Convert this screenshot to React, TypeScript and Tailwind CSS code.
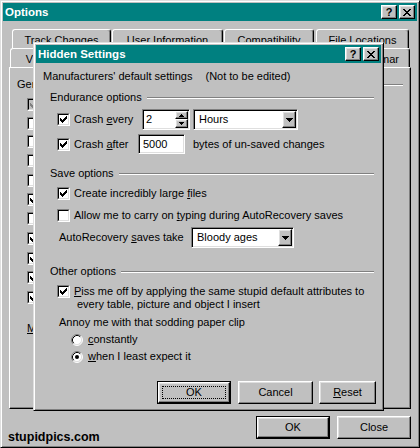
import React from "react";

const frame =
  "border border-t-[#dfdfdf] border-l-[#dfdfdf] border-r-black border-b-black shadow-[inset_1px_1px_0_#fff,inset_-1px_-1px_0_#808080]";
const raised =
  "border border-t-white border-l-white border-r-black border-b-black shadow-[inset_-1px_-1px_0_#808080,inset_1px_1px_0_#dfdfdf]";
const sunken =
  "border border-t-[#808080] border-l-[#808080] border-r-white border-b-white shadow-[inset_1px_1px_0_#000,inset_-1px_-1px_0_#dfdfdf]";

function XGlyph() {
  return (
    <svg width="8" height="7" viewBox="0 0 8 7" shapeRendering="crispEdges" fill="#000">
      <rect x="0" y="0" width="2" height="1" />
      <rect x="6" y="0" width="2" height="1" />
      <rect x="1" y="1" width="2" height="1" />
      <rect x="5" y="1" width="2" height="1" />
      <rect x="2" y="2" width="4" height="1" />
      <rect x="3" y="3" width="2" height="1" />
      <rect x="2" y="4" width="4" height="1" />
      <rect x="1" y="5" width="2" height="1" />
      <rect x="5" y="5" width="2" height="1" />
      <rect x="0" y="6" width="2" height="1" />
      <rect x="6" y="6" width="2" height="1" />
    </svg>
  );
}

function TBtn({ children }: { children: React.ReactNode }) {
  return (
    <div className={`w-[16px] h-[14px] bg-[#c0c0c0] ${raised} flex items-center justify-center`}>
      {children}
    </div>
  );
}

function TitleBar({ title }: { title: string }) {
  return (
    <div className="h-[18px] shrink-0 bg-[#008080] flex items-center justify-between pl-[2px] pr-[2px]">
      <span className="text-white font-bold text-[11.5px] leading-[18px] whitespace-nowrap">{title}</span>
      <div className="flex gap-[2px]">
        <TBtn>
          <span className="font-bold text-[11px] leading-[10px] text-black">?</span>
        </TBtn>
        <TBtn>
          <XGlyph />
        </TBtn>
      </div>
    </div>
  );
}

function CheckMark({ c }: { c: string }) {
  return (
    <svg width="7" height="7" viewBox="0 0 7 7" shapeRendering="crispEdges" fill={c}>
      <rect x="6" y="0" width="1" height="1" />
      <rect x="5" y="1" width="2" height="1" />
      <rect x="0" y="2" width="1" height="1" />
      <rect x="4" y="2" width="3" height="1" />
      <rect x="0" y="3" width="2" height="1" />
      <rect x="3" y="3" width="3" height="1" />
      <rect x="0" y="4" width="5" height="1" />
      <rect x="1" y="5" width="3" height="1" />
      <rect x="2" y="6" width="1" height="1" />
    </svg>
  );
}

function Check({ checked = false, disabled = false }: { checked?: boolean; disabled?: boolean }) {
  return (
    <div className="w-[13px] h-[13px] shrink-0 border border-t-[#808080] border-l-[#808080] border-r-white border-b-white">
      <div
        className={`w-full h-full border border-t-black border-l-black border-r-[#dfdfdf] border-b-[#dfdfdf] flex items-center justify-center ${
          disabled ? "bg-[#c0c0c0]" : "bg-white"
        }`}
      >
        {checked && <CheckMark c={disabled ? "#808080" : "#000"} />}
      </div>
    </div>
  );
}

function Radio({ on = false }: { on?: boolean }) {
  return (
    <svg width="12" height="12" viewBox="0 0 12 12" className="shrink-0">
      <circle cx="6" cy="6" r="5" fill="#fff" />
      <path d="M2.11 9.89A5.5 5.5 0 0 1 9.89 2.11" stroke="#808080" fill="none" />
      <path d="M9.89 2.11A5.5 5.5 0 0 1 2.11 9.89" stroke="#fff" fill="none" />
      <path d="M2.82 9.18A4.5 4.5 0 0 1 9.18 2.82" stroke="#000" fill="none" />
      <path d="M9.18 2.82A4.5 4.5 0 0 1 2.82 9.18" stroke="#dfdfdf" fill="none" />
      {on && <circle cx="6" cy="6" r="2" fill="#000" />}
    </svg>
  );
}

function DownArrow() {
  return (
    <svg width="7" height="4" viewBox="0 0 7 4" shapeRendering="crispEdges" fill="#000">
      <rect x="0" y="0" width="7" height="1" />
      <rect x="1" y="1" width="5" height="1" />
      <rect x="2" y="2" width="3" height="1" />
      <rect x="3" y="3" width="1" height="1" />
    </svg>
  );
}

function SmallArrow({ up }: { up?: boolean }) {
  return (
    <svg width="5" height="3" viewBox="0 0 5 3" shapeRendering="crispEdges" fill="#000">
      {up ? (
        <>
          <rect x="2" y="0" width="1" height="1" />
          <rect x="1" y="1" width="3" height="1" />
          <rect x="0" y="2" width="5" height="1" />
        </>
      ) : (
        <>
          <rect x="0" y="0" width="5" height="1" />
          <rect x="1" y="1" width="3" height="1" />
          <rect x="2" y="2" width="1" height="1" />
        </>
      )}
    </svg>
  );
}

function Spin({ value }: { value: string }) {
  return (
    <div className={`${sunken} bg-white w-[48px] h-[21px] p-[1px] flex shrink-0`}>
      <div className="flex-1 flex items-center pl-[2px] leading-[13px]">{value}</div>
      <div className="w-[13px] flex flex-col">
        <div className={`h-[8px] bg-[#c0c0c0] ${raised} flex items-center justify-center`}>
          <SmallArrow up />
        </div>
        <div className={`flex-1 bg-[#c0c0c0] ${raised} flex items-center justify-center`}>
          <SmallArrow />
        </div>
      </div>
    </div>
  );
}

function Combo({ text, className }: { text: string; className: string }) {
  return (
    <div className={`${sunken} bg-white h-[21px] p-[1px] flex shrink-0 ${className}`}>
      <div className="flex-1 flex items-center pl-[4px] leading-[13px] whitespace-nowrap">{text}</div>
      <div className={`w-[14px] bg-[#c0c0c0] ${raised} flex items-center justify-center`}>
        <DownArrow />
      </div>
    </div>
  );
}

function Button({
  children,
  w,
  def = false,
  focus = false,
  className = "",
}: {
  children: React.ReactNode;
  w: string;
  def?: boolean;
  focus?: boolean;
  className?: string;
}) {
  const inner = (
    <div className={`relative w-full h-full bg-[#c0c0c0] ${raised} flex items-center justify-center leading-[13px]`}>
      {focus && <div className="absolute inset-[3px] border border-dotted border-black" />}
      <span>{children}</span>
    </div>
  );
  return (
    <div className={`${w} h-[23px] shrink-0 ${def ? "border border-black" : ""} ${className}`}>{inner}</div>
  );
}

function Tab({ className = "", label, pt }: { className?: string; label?: string; pt: string }) {
  return (
    <div
      className={`h-full shrink-0 border-t border-l border-r border-t-white border-l-white border-r-black rounded-t-[3px] shadow-[inset_-1px_0_0_#808080] flex items-center justify-center whitespace-nowrap leading-[13px] ${pt} ${className}`}
    >
      {label}
    </div>
  );
}

function Group({ label, className }: { label: string; className: string }) {
  return (
    <div className={`h-[13px] flex items-center pl-[7px] ${className}`}>
      <span className="leading-[13px] whitespace-nowrap">{label}</span>
      <div className="flex-1 ml-[5px] h-[2px] border-t border-t-[#808080] border-b border-b-white" />
    </div>
  );
}

const U = ({ children }: { children: React.ReactNode }) => <span className="underline">{children}</span>;

const leftChecks: { mt: string; checked: boolean; disabled?: boolean }[] = [
  { mt: "mt-[7px]", checked: true, disabled: true },
  { mt: "mt-[6px]", checked: false },
  { mt: "mt-[5px]", checked: false },
  { mt: "mt-[6px]", checked: false },
  { mt: "mt-[7px]", checked: false },
  { mt: "mt-[6px]", checked: true },
  { mt: "mt-[6px]", checked: false },
  { mt: "mt-[7px]", checked: true },
  { mt: "mt-[7px]", checked: true },
  { mt: "mt-[6px]", checked: true },
  { mt: "mt-[7px]", checked: true },
];

export default function App() {
  return (
    <div className="relative w-[420px] h-[448px] overflow-hidden bg-[#c0c0c0] text-black text-[11px] font-['Liberation_Sans',Arial,sans-serif]">
      {/* Options window */}
      <div className={`w-full h-full ${frame} p-[2px] flex flex-col`}>
        <TitleBar title="Options" />
        <div className="mt-[8px] h-[19px] flex pl-[9px]">
          <Tab className="w-[99px]" label="Track Changes" pt="pt-[2px]" />
          <Tab className="ml-[1px] w-[111px]" label="User Information" pt="pt-[2px]" />
          <Tab className="ml-[1px] w-[90px]" label="Compatibility" pt="pt-[2px]" />
          <Tab className="ml-[2px] w-[93px]" label="File Locations" pt="pt-[2px]" />
        </div>
        <div className="h-[19px] flex pl-[7px] pr-[7px]">
          <Tab className="w-[55px]" label="View" pt="pt-[3px]" />
          <Tab className="flex-1" pt="pt-[3px]" />
          <Tab className="flex-1" pt="pt-[3px]" />
          <Tab className="flex-1" pt="pt-[3px]" />
          <Tab className="flex-1" pt="pt-[3px]" />
          <Tab className="w-[121px]" label="Spelling & Grammar" pt="pt-[3px]" />
        </div>
        <div className="mx-[6px] h-[342px] shrink-0 border border-t-white border-l-white border-r-black border-b-black shadow-[inset_-1px_-1px_0_#808080] flex flex-col pl-[7px] pr-[7px]">
          <div className="mt-[10px] h-[13px] flex items-center">
            <span className="leading-[13px] whitespace-nowrap">General options</span>
            <div className="flex-1 ml-[5px] h-[2px] border-t border-t-[#808080] border-b border-b-white" />
          </div>
          {leftChecks.map((c, i) => (
            <div key={i} className={`${c.mt} h-[13px] pl-[10px] flex`}>
              <Check checked={c.checked} disabled={c.disabled} />
            </div>
          ))}
          <div className="mt-[18px] h-[13px] pl-[10px] flex items-center leading-[13px] whitespace-nowrap">
            <span>
              <U>M</U>easurement units:
            </span>
          </div>
        </div>
        <div className="mt-[7px] flex justify-end pr-[6px] gap-[7px]">
          <Button w="w-[74px]" def>
            OK
          </Button>
          <Button w="w-[74px]">Close</Button>
        </div>
      </div>

      {/* Hidden Settings dialog */}
      <div
        className={`absolute left-[33px] top-[42px] w-[351px] h-[369px] bg-[#c0c0c0] ${frame} p-[2px] flex flex-col`}
      >
        <TitleBar title="Hidden Settings" />
        <div className="flex flex-col pl-[7px] pr-[7px] leading-[13px] whitespace-nowrap">
          <div className="mt-[6px] h-[14px] flex items-center">
            <span>Manufacturers' default settings</span>
            <span className="ml-[13px]">(Not to be edited)</span>
          </div>

          <Group label="Endurance options" className="mt-[8px]" />
          <div className="mt-[5px] h-[21px] flex items-center pl-[14px]">
            <Check checked />
            <span className="ml-[4px] w-[68px] shrink-0">
              Crash <U>e</U>very
            </span>
            <Spin value="2" />
            <Combo text="Hours" className="ml-[3px] w-[105px]" />
          </div>
          <div className="mt-[4px] h-[20px] flex items-center pl-[14px]">
            <Check checked />
            <span className="ml-[4px] w-[64px] shrink-0">
              Crash <U>a</U>fter
            </span>
            <div className={`${sunken} bg-white w-[47px] h-[20px] shrink-0 flex items-center pl-[4px]`}>5000</div>
            <span className="ml-[8px]">bytes of un-saved changes</span>
          </div>

          <Group label="Save options" className="mt-[13px]" />
          <div className="mt-[6px] h-[14px] flex items-center pl-[14px]">
            <Check checked />
            <span className="ml-[4px]">
              Create incredibly large <U>f</U>iles
            </span>
          </div>
          <div className="mt-[8px] h-[14px] flex items-center pl-[14px]">
            <Check />
            <span className="ml-[4px]">
              Allow me to carry on <U>t</U>yping during AutoRecovery saves
            </span>
          </div>
          <div className="mt-[5px] h-[21px] flex items-center pl-[16px]">
            <span className="w-[132px] shrink-0">
              AutoRecovery <U>s</U>aves take
            </span>
            <Combo text="Bloody ages" className="w-[103px]" />
          </div>

          <Group label="Other options" className="mt-[17px]" />
          <div className="mt-[7px] flex items-start pl-[14px]">
            <Check checked />
            <div className="ml-[4px] flex flex-col">
              <span>
                <U>P</U>iss me off by applying the same stupid default attributes to
              </span>
              <span className="pl-[3px]">every table, picture and object I insert</span>
            </div>
          </div>
          <div className="mt-[5px] h-[13px] flex items-center pl-[16px]">
            <span>Annoy me with that sodding paper clip</span>
          </div>
          <div className="mt-[4px] h-[13px] flex items-center pl-[28px]">
            <Radio />
            <span className="ml-[5px]">
              <U>c</U>onstantly
            </span>
          </div>
          <div className="mt-[4px] h-[13px] flex items-center pl-[28px]">
            <Radio on />
            <span className="ml-[5px]">
              <U>w</U>hen I least expect it
            </span>
          </div>

          <div className="mt-[18px] flex justify-end -mr-[2px]">
            <Button w="w-[74px]" def focus>
              OK
            </Button>
            <Button w="w-[75px]" className="ml-[7px]">
              Cancel
            </Button>
            <Button w="w-[57px]" className="ml-[6px]">
              <U>R</U>eset
            </Button>
          </div>
        </div>
      </div>

      <div className="absolute left-[8px] top-[431px] text-[12.5px] font-bold leading-[13px] text-black whitespace-nowrap">
        stupidpics.com
      </div>
    </div>
  );
}
